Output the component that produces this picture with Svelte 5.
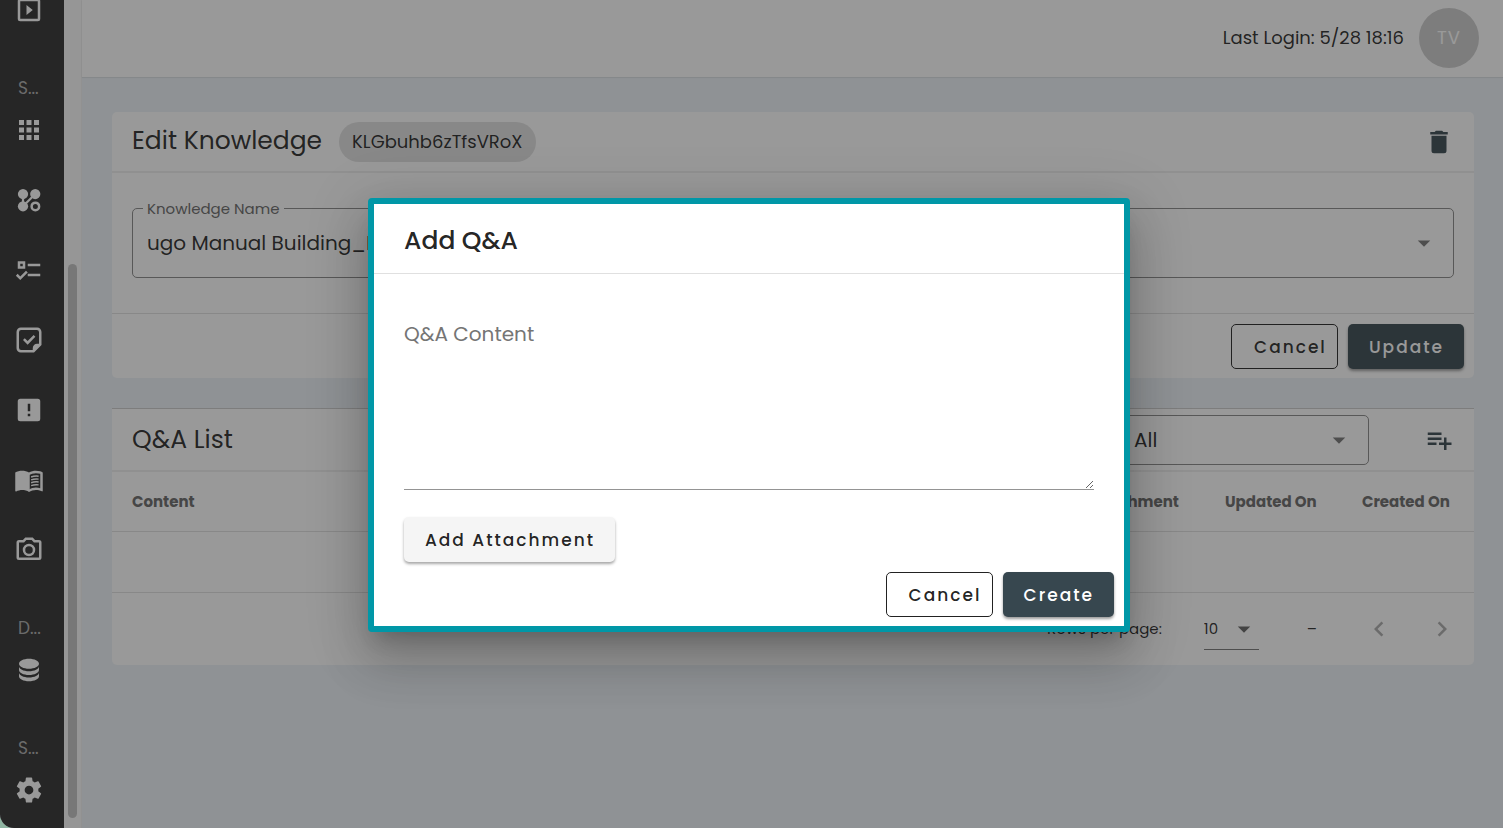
<script lang="ts">
  type NavItem = { label: string; icon: string }
  type NavGroup = { title: string; items: NavItem[] }

  const icons: Record<string, string> = {
    play: 'M19,19H5V5H19M19,3H5A2,2 0 0,0 3,5V19A2,2 0 0,0 5,21H19A2,2 0 0,0 21,19V5A2,2 0 0,0 19,3M10,8V16L15,12',
    apps: 'M16,20H20V16H16M16,14H20V10H16M10,8H14V4H10M16,8H20V4H16M10,14H14V10H10M4,14H8V10H4M4,20H8V16H4M10,20H14V16H10M4,8H8V4H4V8Z',
    checks:
      'M3,5H9V11H3V5M5,7V9H7V7H5M11,7H21V9H11V7M11,15H21V17H11V15M5,20L1.5,16.5L2.91,15.09L5,17.17L9.59,12.59L11,14L5,20Z',
    sticker:
      'M5.5,2C3.56,2 2,3.56 2,5.5V18.5C2,20.44 3.56,22 5.5,22H16L22,16V5.5C22,3.56 20.44,2 18.5,2H5.5M5.75,4H18.25A1.75,1.75 0 0,1 20,5.75V15H18.5C16.56,15 15,16.56 15,18.5V20H5.75A1.75,1.75 0 0,1 4,18.25V5.75A1.75,1.75 0 0,1 5.75,4M15.7,8L10.9,12.8L8.6,10.6L7.2,12L10.9,15.7L17.1,9.4Z',
    alert:
      'M5,3H19A2,2 0 0,1 21,5V19A2,2 0 0,1 19,21H5A2,2 0 0,1 3,19V5A2,2 0 0,1 5,3M13,13V7H11V13H13M13,17V15H11V17H13Z',
    book: 'M21,5C19.89,4.65 18.67,4.5 17.5,4.5C15.55,4.5 13.45,4.9 12,6C10.55,4.9 8.45,4.5 6.5,4.5C4.55,4.5 2.45,4.9 1,6V20.65C1,20.9 1.25,21.15 1.5,21.15C1.6,21.15 1.65,21.1 1.75,21.1C3.1,20.45 5.05,20 6.5,20C8.45,20 10.55,20.4 12,21.5C13.35,20.65 15.8,20 17.5,20C19.15,20 20.85,20.3 22.25,21.05C22.35,21.1 22.4,21.1 22.5,21.1C22.75,21.1 23,20.85 23,20.6V6C22.4,5.55 21.75,5.25 21,5M21,18.5C19.9,18.15 18.7,18 17.5,18C15.8,18 13.35,18.65 12,19.5V8C13.35,7.15 15.8,6.5 17.5,6.5C18.7,6.5 19.9,6.65 21,7V18.5Z',
    camera:
      'M20,4H16.83L15,2H9L7.17,4H4A2,2 0 0,0 2,6V18A2,2 0 0,0 4,20H20A2,2 0 0,0 22,18V6A2,2 0 0,0 20,4M20,18H4V6H8.05L9.88,4H14.12L15.95,6H20V18M12,7A5,5 0 0,0 7,12A5,5 0 0,0 12,17A5,5 0 0,0 17,12A5,5 0 0,0 12,7M12,15A3,3 0 0,1 9,12A3,3 0 0,1 12,9A3,3 0 0,1 15,12A3,3 0 0,1 12,15Z',
    database:
      'M12,3C7.58,3 4,4.79 4,7C4,9.21 7.58,11 12,11C16.42,11 20,9.21 20,7C20,4.79 16.42,3 12,3M4,9V12C4,14.21 7.58,16 12,16C16.42,16 20,14.21 20,12V9C20,11.21 16.42,13 12,13C7.58,13 4,11.21 4,9M4,14V17C4,19.21 7.58,21 12,21C16.42,21 20,19.21 20,17V14C20,16.21 16.42,18 12,18C7.58,18 4,16.21 4,14Z',
    cog: 'M12,15.5A3.5,3.5 0 0,1 8.5,12A3.5,3.5 0 0,1 12,8.5A3.5,3.5 0 0,1 15.5,12A3.5,3.5 0 0,1 12,15.5M19.43,12.97C19.47,12.65 19.5,12.33 19.5,12C19.5,11.67 19.47,11.34 19.43,11L21.54,9.37C21.73,9.22 21.78,8.95 21.66,8.73L19.66,5.27C19.54,5.05 19.27,4.96 19.05,5.05L16.56,6.05C16.04,5.66 15.5,5.32 14.87,5.07L14.5,2.42C14.46,2.18 14.25,2 14,2H10C9.75,2 9.54,2.18 9.5,2.42L9.13,5.07C8.5,5.32 7.96,5.66 7.44,6.05L4.95,5.05C4.73,4.96 4.46,5.05 4.34,5.27L2.34,8.73C2.21,8.95 2.27,9.22 2.46,9.37L4.57,11C4.53,11.34 4.5,11.67 4.5,12C4.5,12.33 4.53,12.65 4.57,12.97L2.46,14.63C2.27,14.78 2.21,15.05 2.34,15.27L4.34,18.73C4.46,18.95 4.73,19.03 4.95,18.95L7.44,17.94C7.96,18.34 8.5,18.68 9.13,18.93L9.5,21.58C9.54,21.82 9.75,22 10,22H14C14.25,22 14.46,21.82 14.5,21.58L14.87,18.93C15.5,18.67 16.04,18.34 16.56,17.94L19.05,18.95C19.27,19.03 19.54,18.95 19.66,18.73L21.66,15.27C21.78,15.05 21.73,14.78 21.54,14.63L19.43,12.97Z',
    trash:
      'M19,4H15.5L14.5,3H9.5L8.5,4H5V6H19M6,19A2,2 0 0,0 8,21H16A2,2 0 0,0 18,19V7H6V19Z',
    playlistPlus:
      'M3,16H10V14H3M18,14V10H16V14H12V16H16V20H18V16H22V14M14,6H3V8H14M14,10H3V12H14V10Z',
    down: 'M7,10L12,15L17,10H7Z',
    left: 'M15.41,16.58L10.83,12L15.41,7.41L14,6L8,12L14,18L15.41,16.58Z',
    right: 'M8.59,16.58L13.17,12L8.59,7.41L10,6L16,12L10,18L8.59,16.58Z',
  }

  const groups: NavGroup[] = [
    { title: '', items: [{ label: 'Player', icon: 'play' }] },
    {
      title: 'S...',
      items: [
        { label: 'Apps', icon: 'apps' },
        { label: 'Flows', icon: 'graph' },
        { label: 'Tasks', icon: 'checks' },
        { label: 'Forms', icon: 'sticker' },
        { label: 'Alerts', icon: 'alert' },
        { label: 'Knowledge', icon: 'book' },
        { label: 'Camera', icon: 'camera' },
      ],
    },
    { title: 'D...', items: [{ label: 'Data', icon: 'database' }] },
    { title: 'S...', items: [{ label: 'Settings', icon: 'cog' }] },
  ]

  let content = $state('')
</script>

{#snippet icon(name: string)}
  <svg class="icon" viewBox="0 0 24 24" aria-hidden="true">
    {#if name === 'graph'}
      <path d="M7.2,7V17M17,7.2L7.2,17" fill="none" stroke="currentColor" stroke-width="1.8" />
      <circle cx="7.2" cy="7.2" r="4.1" />
      <circle cx="17" cy="7.2" r="4.1" />
      <circle cx="7.2" cy="17" r="4.1" />
      <circle cx="17.1" cy="17.1" r="3" fill="#2b2b2b" stroke="currentColor" stroke-width="2" />
    {:else}
      <path d={icons[name]} />
      {#if name === 'book'}
        <path d="M11,6.5L12.6,7.4V20L11,20.4Z" />
        <path
          d="M13.7,9.6Q16.5,8.6 19.7,9M13.7,11.9Q16.5,10.9 19.7,11.3M13.7,14.2Q16.5,13.2 19.7,13.6M13.7,16.5Q16.5,15.5 19.7,15.9"
          fill="none"
          stroke="currentColor"
          stroke-width="1.2"
        />
      {/if}
    {/if}
  </svg>
{/snippet}

<div class="shell">
  <div class="app">
    <aside class="sidebar">
      <nav>
        {#each groups as group}
          {#if group.title}
            <div class="nav-title">{group.title}</div>
          {/if}
          {#each group.items as item}
            <a class="nav-item" href="#{item.icon}" aria-label={item.label}>{@render icon(item.icon)}</a>
          {/each}
        {/each}
      </nav>
    </aside>
    <div class="track"><div class="thumb"></div></div>

    <div class="page">
      <header class="topbar">
        <span>Last Login: 5/28 18:16</span>
        <span class="avatar">TV</span>
      </header>

      <main>
        <section class="card">
          <div class="card-head">
            <h1>Edit Knowledge</h1>
            <span class="chip">KLGbuhb6zTfsVRoX</span>
            <button class="icon-btn" aria-label="Delete">{@render icon('trash')}</button>
          </div>
          <div class="card-body">
            <div class="field">
              <label for="knowledge-name">Knowledge Name</label>
              <select id="knowledge-name">
                <option>ugo Manual Building_M</option>
              </select>
              {@render icon('down')}
            </div>
          </div>
          <div class="actions">
            <button class="btn outlined">Cancel</button>
            <button class="btn primary">Update</button>
          </div>
        </section>

        <section class="card list">
          <div class="card-head">
            <h2>Q&amp;A List</h2>
            <div class="field filter">
              <select aria-label="Filter">
                <option>All</option>
              </select>
              {@render icon('down')}
            </div>
            <button class="icon-btn" aria-label="Add Q&A">{@render icon('playlistPlus')}</button>
          </div>
          <table>
            <thead>
              <tr>
                <th>Content</th>
                <th class="col-attachment">Attachment</th>
                <th class="col-updated">Updated On</th>
                <th class="col-created">Created On</th>
              </tr>
            </thead>
            <tbody>
              <tr><td colspan="4"></td></tr>
            </tbody>
          </table>
          <div class="pager">
            <label for="rows">Rows per page:</label>
            <div class="rows">
              <select id="rows">
                <option>10</option>
              </select>
              {@render icon('down')}
            </div>
            <span class="range">–</span>
            <button class="page-btn" aria-label="Previous page" disabled>{@render icon('left')}</button>
            <button class="page-btn" aria-label="Next page" disabled>{@render icon('right')}</button>
          </div>
        </section>
      </main>
    </div>

    <div class="overlay">
      <div class="dialog" role="dialog" aria-modal="true" aria-labelledby="dialog-title">
        <h2 id="dialog-title">Add Q&amp;A</h2>
        <div class="dialog-body">
          <label for="qa-content">Q&amp;A Content</label>
          <textarea id="qa-content" bind:value={content}></textarea>
          <button class="btn light">Add Attachment</button>
        </div>
        <div class="actions">
          <button class="btn outlined">Cancel</button>
          <button class="btn primary">Create</button>
        </div>
      </div>
    </div>
  </div>
</div>

<style>
  :global(body) {
    background: #fff;
  }

  * {
    box-sizing: border-box;
  }

  .shell {
    margin: 0 3px 4px 0;
    background: #8fb5a2;
    font-family: Poppins, Inter, 'Open Sans', sans-serif;
    font-size: 18px;
    color: rgba(0, 0, 0, 0.87);
  }

  .app {
    position: relative;
    display: flex;
    min-height: calc(100vh - 4px);
    border-bottom-left-radius: 14px;
    overflow: hidden;
    background: #edf3f8;
  }

  button,
  select,
  textarea {
    font: inherit;
    color: inherit;
  }

  h1,
  h2 {
    margin: 0;
    font-size: 25px;
    font-weight: 400;
    line-height: 40px;
  }

  .icon {
    display: block;
    flex: none;
    width: 30px;
    height: 30px;
    fill: currentColor;
  }

  .sidebar {
    flex: none;
    width: 64px;
    background: #2b2b2b;
    color: #fff;
    overflow: hidden;
  }

  nav {
    margin-top: -25px;
  }

  .nav-item {
    display: flex;
    align-items: center;
    height: 70px;
    padding-left: 14px;
    color: #fff;
  }

  .nav-title {
    display: flex;
    align-items: flex-end;
    height: 50px;
    padding-left: 18px;
    font-size: 17px;
    line-height: 14px;
    color: #aaa;
  }

  .track {
    display: flex;
    flex: none;
    width: 18px;
    padding: 264px 4px 10px;
    background: #fafafa;
    border-right: 1px solid #f0f0f0;
  }

  .thumb {
    width: 10px;
    border-radius: 5px;
    background: #c1c1c1;
  }

  .page {
    flex: 1;
    min-width: 0;
  }

  .topbar {
    display: flex;
    align-items: center;
    justify-content: flex-end;
    gap: 15px;
    height: 77px;
    padding: 0 24px 2px 0;
    background: #fff;
    box-shadow: 0 1px 1px rgba(0, 0, 0, 0.08);
  }

  .avatar {
    display: grid;
    place-items: center;
    width: 60px;
    height: 60px;
    border-radius: 50%;
    background: #ccc;
    color: #fff;
    letter-spacing: 1px;
  }

  main {
    display: grid;
    gap: 30px;
    padding: 35px 29px 35px 30px;
  }

  .card {
    border-radius: 5px;
    background: #fff;
  }

  .card-head {
    display: flex;
    align-items: center;
    height: 61px;
    padding: 0 20px;
    border-bottom: 2px solid #eee;
  }

  .card-head h1 {
    padding-bottom: 2px;
  }

  .chip {
    margin-left: 17px;
    padding: 0 13px;
    border-radius: 20px;
    background: #e0e0e0;
    line-height: 40px;
  }

  .icon-btn {
    display: flex;
    margin-left: auto;
    padding: 0;
    border: 0;
    background: none;
    color: #37474f;
  }

  .card-body {
    padding: 35px 20px;
  }

  .field {
    position: relative;
    height: 70px;
    border: 1px solid #888;
    border-radius: 5px;
    font-size: 20px;
  }

  .field label {
    position: absolute;
    top: -10px;
    left: 10px;
    padding: 0 4px;
    background: #fff;
    font-size: 15px;
    line-height: 20px;
    color: #666;
  }

  .field select {
    width: 100%;
    height: 100%;
    padding: 0 14px;
    border: 0;
    background: none;
    appearance: none;
  }

  .field .icon {
    position: absolute;
    top: calc(50% - 15px);
    right: 14px;
    color: #757575;
    pointer-events: none;
  }

  .actions {
    display: flex;
    justify-content: flex-end;
    gap: 10px;
    padding: 10px 10px 9px;
  }

  .card .actions {
    border-top: 1px solid #e0e0e0;
  }

  .btn {
    height: 45px;
    padding: 0 20px 0 21px;
    border: 0;
    border-radius: 5px;
    font-size: 17px;
    font-weight: 500;
    letter-spacing: 2px;
  }

  .outlined {
    padding: 0 10px 0 22px;
    border: 1px solid #222;
    background: none;
  }

  .primary {
    background: #37474f;
    color: #fff;
    box-shadow: 0 2px 3px rgba(0, 0, 0, 0.4);
  }

  .light {
    background: #f5f5f5;
    box-shadow: 0 2px 3px rgba(0, 0, 0, 0.35);
  }

  .list {
    border-top: 1px solid #ccc;
    border-radius: 0 0 5px 5px;
  }

  .list .card-head {
    height: 63px;
  }

  .filter {
    width: 250px;
    height: 50px;
    margin: 0 55px 0 auto;
  }

  .filter + .icon-btn {
    margin-left: 0;
  }

  table {
    width: 100%;
    border-collapse: collapse;
    table-layout: fixed;
  }

  th {
    height: 59px;
    padding: 0 20px;
    border-bottom: 1px solid #e0e0e0;
    font-size: 15px;
    font-weight: 700;
    text-align: left;
    white-space: nowrap;
    color: #666;
  }

  td {
    height: 61px;
    padding: 0;
    border-bottom: 1px solid #e0e0e0;
  }

  .col-attachment {
    width: 140px;
  }

  .col-updated {
    width: 137px;
  }

  .col-created {
    width: 132px;
  }

  .pager {
    display: flex;
    align-items: center;
    justify-content: flex-end;
    height: 72px;
    padding-right: 17px;
    font-size: 15px;
  }

  .rows {
    position: relative;
    width: 55px;
    height: 42px;
    margin: 0 48px 0 42px;
    border-bottom: 1px solid #757575;
  }

  .rows select {
    width: 100%;
    height: 100%;
    padding: 0;
    border: 0;
    background: none;
    appearance: none;
  }

  .rows .icon {
    position: absolute;
    top: 6px;
    right: 0;
    color: #616161;
    pointer-events: none;
  }

  .range {
    margin-right: 47px;
  }

  .page-btn {
    display: flex;
    padding: 0;
    border: 0;
    background: none;
    color: #aaa;
  }

  .page-btn + .page-btn {
    margin-left: 33px;
  }

  .overlay {
    position: absolute;
    inset: 0;
    display: grid;
    place-items: center;
    padding: 2px 5px 0 0;
    background: rgba(33, 33, 33, 0.46);
  }

  .dialog {
    width: 762px;
    max-width: 90%;
    border: 6px solid #0097a7;
    border-radius: 4px;
    background: #fff;
    box-shadow:
      0 14px 19px -9px rgba(0, 0, 0, 0.2),
      0 30px 48px 4px rgba(0, 0, 0, 0.14),
      0 11px 58px 10px rgba(0, 0, 0, 0.12);
  }

  .dialog h2 {
    padding: 17px 30px 12px;
    border-bottom: 1px solid #e0e0e0;
    font-weight: 500;
  }

  .dialog-body {
    padding: 48px 30px 0;
  }

  .dialog-body label {
    display: block;
    font-size: 20px;
    line-height: 24px;
    color: #757575;
  }

  .dialog-body textarea {
    display: block;
    width: 100%;
    height: 144px;
    margin-bottom: 27px;
    padding: 0;
    border: 0;
    border-bottom: 1px solid #949494;
    outline: 0;
    background: none;
    resize: vertical;
  }
</style>
